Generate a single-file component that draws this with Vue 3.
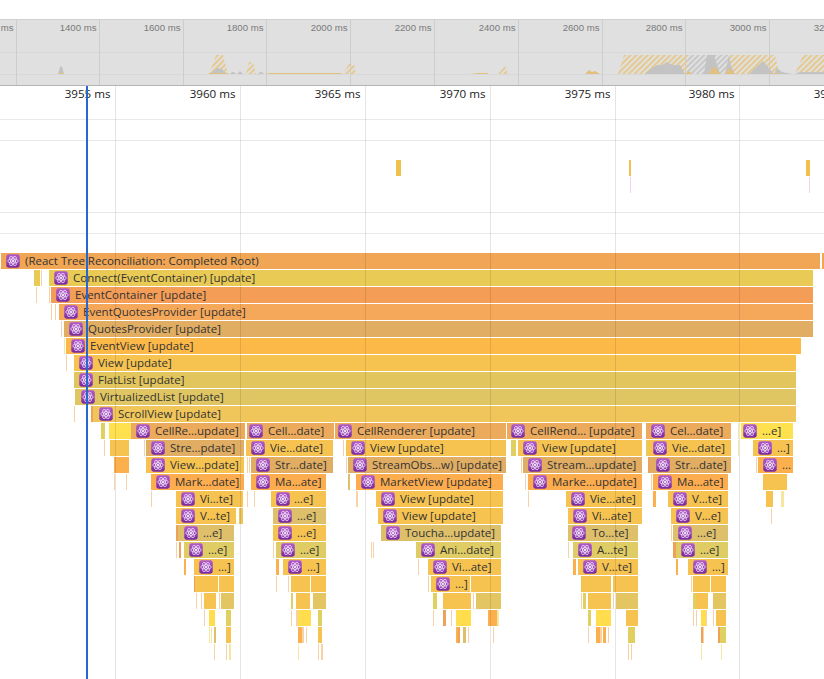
<script setup>
const C = {
  root: '#f0a655', conn: '#e9ca55', cont: '#f49d56', evq: '#f6a85a', tan: '#e0ad62', evv: '#fdb948',
  v: '#f6c351', fl: '#e2c55c', vl: '#e0c662', sv: '#f0c65a', cell: '#ecaa5c', y: '#ffe14f', y2: '#ffdd4d',
  or: '#fdac4e', to: '#dfc06a', an: '#e0cc64', s2: '#e3c562', g: '#e0d060', o2: '#fbb04d', o3: '#eda258',
  l: '#f6d2a6', ly: '#f5e6a0', pk: '#f5d0ea', sb: '#f0bf4e'
}
const raw = [
  [0,1,820,'root','(React Tree Reconciliation: Completed Root)',6],[0,822,824,'root'],
  [1,34,40,'conn'],[1,41,42,'l'],[1,49,813,'conn','Connect(EventContainer) [update]',54],
  [2,36,37,'l'],[2,49,50,'l'],[2,51,813,'cont','EventContainer [update]',56],
  [3,51,52,'l'],[3,55,56,'l'],[3,59,813,'evq','EventQuotesProvider [update]',64],
  [4,61,62,'l'],[4,64,813,'tan','QuotesProvider [update]',69],
  [5,64,65,'ly'],[5,66,801,'evv','EventView [update]',71],
  [6,66,67,'l'],[6,74,796,'v','View [update]',79],
  [7,74,796,'fl','FlatList [update]',79],
  [8,75,796,'vl','VirtualizedList [update]',81],
  [9,74,75,'l'],[9,91,93,'o3'],[9,93,796,'sv','ScrollView [update]',99],
  [10,101,105,'g'],[10,109,131,'y'],[10,131,245,'cell','CellRe…update]',136],
  [10,247,334,'cell','Cell…date]',249],[10,335,506,'cell','CellRenderer [update]',338],
  [10,507,642,'cell','CellRend… [update]',511],[10,646,731,'cell','Cel…date]',651],
  [10,738,739,'ly'],[10,741,793,'y','…e]',743,0,762],
  [11,104,105,'l'],[11,110,129,'v'],[11,144,145,'l'],[11,146,244,'tan','Stre…pdate]',151],
  [11,246,333,'v','Vie…date]',251],[11,343,344,'l'],[11,346,506,'v','View [update]',351],
  [11,511,516,'g'],[11,518,642,'v','View [update]',523],[11,646,647,'g'],[11,647,731,'v','Vie…date]',653],
  [11,738,739,'ly'],[11,753,793,'v','…]',758],
  [12,114,129,'o2'],[12,146,244,'v','View…pdate]',151],[12,247,248,'l'],[12,249,250,'l'],[12,251,333,'tan','Str…date]',256],
  [12,346,347,'l'],[12,348,506,'tan','StreamObs…w) [update]',353],[12,521,522,'l'],[12,523,642,'tan','Stream…update]',528],
  [12,648,650,'o3'],[12,650,731,'tan','Str…date]',656],[12,756,757,'l'],[12,758,793,'o2','…',763],
  [13,114,115,'l'],[13,126,127,'l'],[13,151,244,'or','Mark…date]',156],[13,251,326,'or','Ma…ate]',256],
  [13,348,350,'to'],[13,356,503,'or','MarketView [update]',361],[13,525,526,'l'],[13,528,642,'or','Marke…update]',533],
  [13,651,652,'l'],[13,653,728,'or','Ma…ate]',658],[13,763,787,'v'],
  [14,151,152,'l'],[14,176,243,'v','Vi…te]',181],[14,247,248,'l'],[14,254,255,'l'],[14,271,326,'v','…e]',276,0,294],
  [14,356,358,'l'],[14,376,503,'v','View [update]',381],[14,528,529,'l'],[14,566,642,'v','Vie…ate]',571],
  [14,653,656,'o2'],[14,668,728,'v','V…te]',673],[14,766,773,'v'],[14,781,784,'ly'],
  [15,176,236,'v','V…te]',181],[15,239,243,'sv'],[15,273,326,'to','…e]',278,0,297],[15,378,503,'v','View [update]',383],
  [15,568,642,'v','Vi…ate]',573],[15,671,728,'v','V…e]',676],[15,771,772,'l'],
  [16,176,178,'o3'],[16,178,234,'to','…e]',184,0,203],[16,273,326,'v','…e]',278,0,297],[16,381,501,'to','Toucha…update]',386],
  [16,568,638,'to','To…te]',572,0,592],[16,671,672,'l'],[16,673,728,'to','…e]',678,0,697],
  [17,176,177,'l'],[17,179,181,'o3'],[17,184,234,'an','…e]',189,0,208],[17,273,274,'l'],[17,276,326,'an','…e]',281,0,300],
  [17,371,372,'l'],[17,373,374,'l'],[17,416,501,'an','Ani…date]',421],[17,568,569,'l'],[17,573,638,'an','A…te]',578],
  [17,673,676,'o3'],[17,676,728,'an','…e]',681,0,700],
  [18,184,186,'o2'],[18,194,234,'v','…]',199],[18,276,279,'o2'],[18,283,326,'v','…]',288,0,307],
  [18,418,419,'l'],[18,428,501,'v','Vi…ate]',433],[18,573,576,'o2'],[18,578,638,'v','V…te]',583],
  [18,676,678,'o2'],[18,688,728,'v','…]',693,0,712],
  [19,194,195,'o3'],[19,195,218,'v'],[19,219,234,'v'],[19,276,277,'l'],[19,288,289,'l'],[19,291,310,'v'],[19,311,326,'v'],
  [19,428,429,'l'],[19,431,470,'v','…]',436],[19,471,501,'v'],[19,581,611,'v'],[19,613,638,'v'],
  [19,691,692,'l'],[19,693,710,'v'],[19,711,726,'v'],
  [20,196,197,'l'],[20,201,202,'l'],[20,204,216,'v'],[20,219,220,'l'],[20,221,234,'s2'],
  [20,291,293,'g'],[20,296,310,'v'],[20,313,326,'s2'],[20,433,437,'g'],[20,443,471,'v'],[20,473,474,'l'],[20,476,501,'s2'],
  [20,581,582,'l'],[20,583,586,'g'],[20,588,611,'v'],[20,613,614,'l'],[20,616,638,'s2'],
  [20,693,696,'g'],[20,696,708,'v'],[20,713,726,'s2'],
  [21,204,205,'l'],[21,209,215,'y2'],[21,226,231,'g'],[21,291,292,'l'],[21,296,298,'l'],[21,298,311,'y2'],[21,318,322,'g'],
  [21,433,434,'l'],[21,443,446,'o3'],[21,451,452,'l'],[21,456,471,'y2'],[21,488,497,'o2'],[21,497,499,'ly'],
  [21,588,591,'g'],[21,596,611,'y2'],[21,626,638,'v'],
  [21,693,694,'l'],[21,696,697,'l'],[21,701,706,'y2'],[21,706,707,'l'],[21,713,714,'l'],[21,716,726,'v'],
  [22,209,210,'ly'],[22,211,212,'ly'],[22,214,216,'to'],[22,226,231,'v'],
  [22,298,302,'o2'],[22,302,304,'l'],[22,306,307,'l'],[22,318,322,'v'],
  [22,456,458,'o2'],[22,458,460,'o3'],[22,463,466,'to'],[22,468,469,'l'],[22,493,494,'l'],
  [22,588,589,'l'],[22,596,600,'o2'],[22,600,602,'l'],[22,603,606,'o2'],[22,608,609,'l'],[22,628,635,'g'],
  [22,701,703,'o3'],[22,703,704,'l'],[22,718,720,'o3'],[22,720,726,'g'],
  [23,214,215,'l'],[23,226,227,'l'],[23,229,231,'ly'],[23,298,299,'ly'],[23,318,319,'l'],[23,321,323,'l'],
  [23,628,629,'l'],[23,631,632,'l'],[23,701,702,'ly'],[23,721,722,'ly']
]
const bars = raw.map(([r, a, b, c, label, icon, , textX]) => ({
  top: 167 + 17 * r,
  left: a,
  width: b - a,
  color: C[c],
  label,
  pad: icon ? icon - a : 0,
  gap: textX ? textX - icon - 14 : 5
}))
const marks = [
  { left: 396, top: 74, width: 5, color: C.sb },
  { left: 629, top: 74, width: 2, color: C.sb },
  { left: 806, top: 74, width: 4, color: C.sb },
  { left: 630, top: 91, width: 1, color: C.pk },
  { left: 809, top: 91, width: 1, color: C.pk }
]
const overviewTicks = [
  [16, '1200 ms'], [99, '1400 ms'], [183, '1600 ms'], [266, '1800 ms'], [350, '2000 ms'], [434, '2200 ms'],
  [518, '2400 ms'], [602, '2600 ms'], [685, '2800 ms'], [769, '3000 ms'], [853, '3200 ms']
].map(([x, t]) => ({ x, t }))
const ticks = [115, 240, 365, 490, 615, 739, 864].map((x, i) => ({ x, t: 3955 + i * 5 + ' ms' }))
const rules = [33, 54, 126, 147]
const hatches = [
  { fill: 'url(#hy)', pts: '209,74 216,55 223,55 228,74' },
  { fill: 'url(#hy)', pts: '246,74 249,62 253,62 256,74' },
  { fill: 'url(#hy)', pts: '343,74 349,64 354,64 356,74' },
  { fill: 'url(#hy)', pts: '498,74 505,66 508,74' },
  { fill: 'url(#hy)', pts: '618,74 624,55 687,55 687,74' },
  { fill: 'url(#hg)', pts: '687,55 729,55 729,74 687,74' },
  { fill: 'url(#hy)', pts: '729,55 775,55 778,68 780,74 729,74' },
  { fill: 'url(#hy)', pts: '795,74 803,55 824,55 824,74' }
]
const gray = [
  '58,74 60,67 62,66 64,74', '210,74 217,68 222,69 227,74', '230,74 232,72 234,72 236,74', '237,74 240,71 243,74',
  '258,74 260,72 262,72 264,74', '645,74 652,68 657,65 662,65 667,62 672,65 680,65 685,74',
  '704,74 707,55 714,55 720,74', '725,74 727,65 729,55 731,66 735,74', '749,74 755,68 763,61 768,67 774,74',
  '774,74 777,68 782,72 792,74', '795,74 800,72 824,72 824,74'
]
const yellow = [
  '58,74 58,73 64,73 64,74', '265,74 270,73 300,73 340,73 343,74', '209,74 209,73 228,73 228,74', '470,74 478,73 488,73 488,74',
  '585,74 589,70 592,72 595,71 600,74', '686,74 689,71 692,74', '709,74 713,67 716,68 720,74',
  '725,74 729,68 735,74', '765,74 775,73 782,74'
]
</script>

<template>
  <div class="page">
    <div class="top"></div>
    <div class="overview">
      <svg class="spark" width="824" height="66" viewBox="0 20 824 66">
        <defs>
          <pattern id="hy" width="4" height="4" patternUnits="userSpaceOnUse" patternTransform="rotate(45)">
            <rect width="2" height="4" fill="#e5c98f" />
          </pattern>
          <pattern id="hg" width="4" height="4" patternUnits="userSpaceOnUse" patternTransform="rotate(45)">
            <rect width="2" height="4" fill="#c8c8c8" />
          </pattern>
        </defs>
        <line x1="0" x2="824" y1="52.5" y2="52.5" stroke="#d8d8d8" />
        <line x1="0" x2="824" y1="74.5" y2="74.5" stroke="#d8d8d8" />
        <line v-for="o in overviewTicks" :key="o.x" :x1="o.x + 0.5" :x2="o.x + 0.5" y1="20" y2="85" stroke="#cdcdcd" />
        <polygon v-for="(h, i) in hatches" :key="'h' + i" :points="h.pts" :fill="h.fill" />
        <polygon v-for="(p, i) in gray" :key="'g' + i" :points="p" fill="#c3c3c3" />
        <polygon v-for="(p, i) in yellow" :key="'y' + i" :points="p" fill="#e3c07e" />
      </svg>
      <span v-for="o in overviewTicks" :key="o.x" class="otick" :style="{ left: o.x - 62.5 + 'px' }">{{ o.t }}</span>
    </div>
    <div class="chart">
      <svg width="0" height="0" class="defs">
        <defs>
          <linearGradient id="pg" x1="0" y1="0" x2="0" y2="1">
            <stop offset="0" stop-color="#b25ccb" />
            <stop offset="1" stop-color="#7a2a9e" />
          </linearGradient>
          <symbol id="atom" viewBox="0 0 14 14">
            <rect x="0.25" y="0.25" width="13.5" height="13.5" rx="2.4" fill="url(#pg)" />
            <g fill="none" stroke="#f4e6f9" stroke-width="0.75">
              <ellipse cx="7" cy="7" rx="5.2" ry="2.1" />
              <ellipse cx="7" cy="7" rx="5.2" ry="2.1" transform="rotate(60 7 7)" />
              <ellipse cx="7" cy="7" rx="5.2" ry="2.1" transform="rotate(120 7 7)" />
            </g>
            <circle cx="7" cy="7" r="1.1" fill="#fff" />
          </symbol>
        </defs>
      </svg>
      <div v-for="r in rules" :key="r" class="rule" :style="{ top: r + 'px' }"></div>
      <div v-for="m in marks" :key="m.left + '-' + m.top" class="mark"
        :style="{ left: m.left + 'px', top: m.top + 'px', width: m.width + 'px', background: m.color }"></div>
      <div v-for="(b, i) in bars" :key="i" class="bar"
        :style="{ left: b.left + 'px', top: b.top + 'px', width: b.width + 'px', background: b.color, paddingLeft: b.pad + 'px', columnGap: b.gap + 'px' }">
        <template v-if="b.label">
          <svg class="icon" width="14" height="14"><use href="#atom" /></svg>
          <span class="label">{{ b.label }}</span>
        </template>
      </div>
      <div v-for="t in ticks" :key="t.x" class="grid" :style="{ left: t.x + 'px' }"></div>
      <span v-for="t in ticks" :key="t.t" class="tick" :style="{ left: t.x - 64.5 + 'px' }">{{ t.t }}</span>
      <div class="cursor"></div>
    </div>
  </div>
</template>

<style scoped>
.page {
  width: 824px;
  height: 679px;
  display: flex;
  flex-direction: column;
  overflow: hidden;
  background: #fff;
  font-family: "Open Sans", "Liberation Sans", sans-serif;
}
.top {
  height: 19px;
  flex: none;
}
.overview {
  position: relative;
  height: 67px;
  flex: none;
  box-sizing: border-box;
  background: #e0e0e0;
  border-top: 1px solid #d0d0d0;
  border-bottom: 1px solid #b4b4b4;
  overflow: hidden;
}
.spark {
  display: block;
  position: absolute;
  left: 0;
  top: 0;
}
.otick {
  position: absolute;
  top: 0;
  width: 60px;
  text-align: right;
  font: 9.6px/15px "Liberation Sans", sans-serif;
  color: #7a7a7a;
}
.chart {
  position: relative;
  flex: 1;
  overflow: hidden;
}
.defs {
  position: absolute;
}
.rule {
  position: absolute;
  left: 0;
  right: 0;
  height: 1px;
  background: #e9e9e9;
}
.mark {
  position: absolute;
  height: 16px;
}
.bar {
  position: absolute;
  height: 16px;
  display: flex;
  align-items: center;
  box-sizing: border-box;
  overflow: hidden;
}
.icon {
  flex: none;
}
.label {
  font-size: 11.5px;
  line-height: 16px;
  color: #333;
  white-space: nowrap;
}
.grid {
  position: absolute;
  top: 0;
  bottom: 0;
  width: 1px;
  background: rgba(0, 0, 0, 0.1);
}
.tick {
  position: absolute;
  top: 0;
  width: 60px;
  text-align: right;
  font-size: 11.6px;
  line-height: 15px;
  color: #222;
  white-space: nowrap;
}
.cursor {
  position: absolute;
  left: 86px;
  top: 0;
  bottom: 0;
  width: 2px;
  background: #2767d0;
}
</style>
